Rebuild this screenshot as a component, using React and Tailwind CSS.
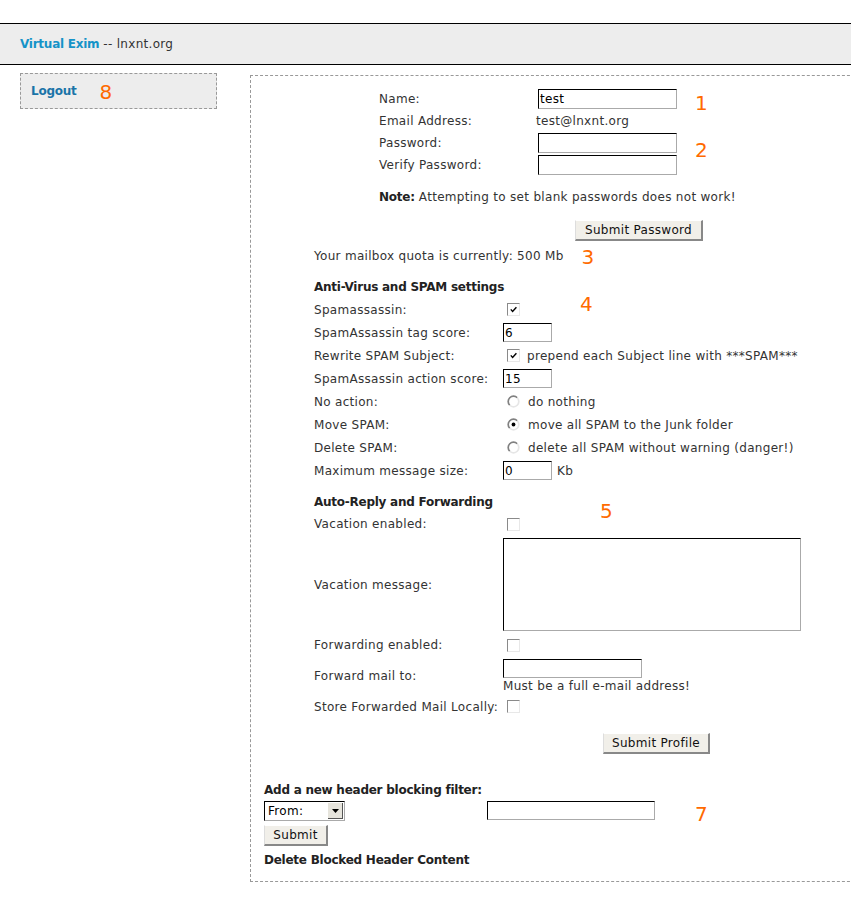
import React from "react";

// annotation digit used throughout the screenshot
const Num = ({ children, className = "" }) => (
  <span className={`text-[20px] leading-none tracking-normal text-[#ff6a00] ${className}`}>{children}</span>
);

const Input = ({ value = "", className = "" }) => (
  <div
    className={`flex items-center border-t border-l border-r border-b border-t-black border-l-black border-r-[#aaa] border-b-[#aaa] bg-white pl-[1px] text-[12px] text-black ${className}`}
  >
    {value}
  </div>
);

const Button = ({ children, className = "" }) => (
  <div
    className={`flex h-[21px] items-center justify-center border-t border-l border-r-2 border-b-2 border-t-white border-l-[#ddd] border-r-[#888] border-b-[#888] bg-[#f1efe9] text-[12px] text-[#111] ${className}`}
  >
    {children}
  </div>
);

const Check = ({ checked, className = "" }) => (
  <span
    className={`inline-flex h-[13px] w-[13px] shrink-0 items-center justify-center border border-t-[#8a8a8a] border-l-[#8a8a8a] border-r-[#e8e8e8] border-b-[#e8e8e8] bg-white ${className}`}
  >
    {checked && (
      <svg width="7" height="7" viewBox="0 0 7 7">
        <path d="M0.8 3.4 L2.6 5.4 L6.4 1.2" stroke="#000" strokeWidth="1.4" fill="none" />
      </svg>
    )}
  </span>
);

const Radio = ({ checked, className = "" }) => (
  <svg width="13" height="13" viewBox="0 0 13 13" className={`shrink-0 ${className}`}>
    <circle cx="6.5" cy="6.5" r="5.3" fill="#fff" />
    <path d="M2.75 10.25 A5.3 5.3 0 0 1 10.25 2.75" stroke="#808080" strokeWidth="1.7" fill="none" />
    <path d="M10.25 2.75 A5.3 5.3 0 0 1 2.75 10.25" stroke="#e6e6e6" strokeWidth="1.7" fill="none" />
    {checked && <circle cx="6.5" cy="6.5" r="1.9" fill="#000" />}
  </svg>
);

const Row = ({ label, children, className = "h-[23px]" }) => (
  <>
    <div className={`flex items-center ${className}`}>{label}</div>
    <div className={`flex items-center ${className}`}>{children}</div>
  </>
);

export default function App() {
  return (
    <div className="min-h-[897px] w-full overflow-hidden bg-white font-['DejaVu_Sans',sans-serif] text-[12px] leading-[16px] tracking-[0.3px] text-[#333]">
      {/* top bar */}
      <header className="mt-[23px] flex h-[42px] items-center border-y border-black bg-[#ededed] pl-[20px]">
        <span className="font-bold tracking-[-0.25px] text-[#1593c8]">Virtual Exim</span>
        <span className="ml-[4px]">-- lnxnt.org</span>
      </header>

      <div className="flex items-start pl-[20px] pt-[8px]">
        {/* side menu */}
        <aside className="flex h-[36px] w-[197px] shrink-0 items-center border border-dashed border-[#999] bg-[#ededed] pl-[10px]">
          <span className="font-bold tracking-[-0.25px] text-[#1a74a8]">Logout</span>
          <Num className="ml-[23px] mt-[1px]">8</Num>
        </aside>

        {/* main form */}
        <main className="ml-[33px] mt-[2px] w-[620px] shrink-0 border border-dashed border-[#999] pb-[13px] pt-[12px]">
          {/* account */}
          <div className="ml-[128px] grid grid-cols-[159px_139px_auto]">
            <div className="col-start-1 row-start-1 flex h-[22px] items-center">Name:</div>
            <div className="col-start-2 row-start-1 flex h-[22px] items-center">
              <Input value="test" className="h-[20px] w-[139px]" />
            </div>
            <Num className="col-start-3 row-start-1 -mb-[3px] self-end pl-[18px]">1</Num>

            <div className="col-start-1 row-start-2 flex h-[22px] items-center">Email Address:</div>
            <div className="col-start-2 row-start-2 -ml-[2px] flex h-[22px] items-center">test@lnxnt.org</div>

            <div className="col-start-1 row-start-3 flex h-[22px] items-center">Password:</div>
            <div className="col-start-2 row-start-3 flex h-[22px] items-center">
              <Input className="h-[20px] w-[139px]" />
            </div>
            <Num className="col-start-3 row-start-3 row-span-2 -mt-[8px] self-center pl-[18px]">2</Num>

            <div className="col-start-1 row-start-4 flex h-[22px] items-center">Verify Password:</div>
            <div className="col-start-2 row-start-4 flex h-[22px] items-center">
              <Input className="h-[20px] w-[139px]" />
            </div>
          </div>

          <p className="ml-[128px] mt-[13px]">
            <b className="tracking-[-0.25px] text-[#222]">Note:</b> Attempting to set blank passwords does not work!
          </p>
          <Button className="ml-[324px] mt-[15px] w-[128px]">Submit Password</Button>

          <div className="ml-[63px] mt-[3px] flex items-center">
            <span>Your mailbox quota is currently: 500 Mb</span>
            <Num className="ml-[18px] mt-[3px]">3</Num>
          </div>

          {/* spam */}
          <div className="ml-[63px] mt-[9px] grid grid-cols-[189px_auto]">
            <div className="col-span-2 flex h-[22px] items-center font-bold tracking-[-0.25px] text-[#222]">
              Anti-Virus and SPAM settings
            </div>
            <Row label="Spamassassin:">
              <Check checked className="ml-[4px]" />
              <Num className="ml-[60px] -mt-[12px]">4</Num>
            </Row>
            <Row label="SpamAssassin tag score:">
              <Input value="6" className="h-[19px] w-[49px]" />
            </Row>
            <Row label="Rewrite SPAM Subject:">
              <Check checked className="ml-[4px]" />
              <span className="ml-[7px]">prepend each Subject line with ***SPAM***</span>
            </Row>
            <Row label="SpamAssassin action score:">
              <Input value="15" className="h-[19px] w-[49px]" />
            </Row>
            <Row label="No action:">
              <Radio className="ml-[4px]" />
              <span className="ml-[8px]">do nothing</span>
            </Row>
            <Row label="Move SPAM:">
              <Radio checked className="ml-[4px]" />
              <span className="ml-[8px]">move all SPAM to the Junk folder</span>
            </Row>
            <Row label="Delete SPAM:">
              <Radio className="ml-[4px]" />
              <span className="ml-[8px]">delete all SPAM without warning (danger!)</span>
            </Row>
            <Row label="Maximum message size:">
              <Input value="0" className="h-[19px] w-[49px]" />
              <span className="ml-[5px]">Kb</span>
            </Row>
          </div>

          {/* auto reply */}
          <div className="ml-[63px] mt-[9px] grid grid-cols-[189px_auto]">
            <div className="col-start-1 row-start-1 flex h-[22px] items-center whitespace-nowrap font-bold tracking-[-0.25px] text-[#222]">
              Auto-Reply and Forwarding
            </div>
            <Num className="col-start-2 row-start-1 row-span-2 -mt-[4px] self-center pl-[97px]">5</Num>

            <div className="col-start-1 row-start-2 flex h-[22px] items-center">Vacation enabled:</div>
            <div className="col-start-2 row-start-2 flex h-[22px] items-center">
              <Check className="ml-[4px]" />
            </div>

            <div className="col-start-1 row-start-3 flex items-center">Vacation message:</div>
            <div className="col-start-2 row-start-3 flex items-center py-[3px]">
              <Input className="h-[93px] w-[298px]" />
            </div>

            <div className="col-start-1 row-start-4 flex h-[22px] items-center">Forwarding enabled:</div>
            <div className="col-start-2 row-start-4 flex h-[22px] items-center">
              <Check className="ml-[4px]" />
            </div>

            <div className="col-start-1 row-start-5 flex items-center">Forward mail to:</div>
            <div className="col-start-2 row-start-5 flex flex-col pt-[3px]">
              <Input className="h-[19px] w-[139px]" />
              <span className="leading-[17px]">Must be a full e-mail address!</span>
            </div>

            <div className="col-start-1 row-start-6 flex h-[23px] items-center whitespace-nowrap">Store Forwarded Mail Locally:</div>
            <div className="col-start-2 row-start-6 flex h-[23px] items-center">
              <Check className="ml-[4px]" />
            </div>
          </div>

          <Button className="ml-[352px] mt-[15px] w-[107px]">Submit Profile</Button>

          {/* header filters */}
          <div className="ml-[13px] mt-[28px]">
            <p className="font-bold tracking-[-0.25px] text-[#222]">Add a new header blocking filter:</p>
            <div className="mt-[3px] flex items-start">
              <div className="flex h-[20px] w-[81px] items-center justify-between border-t border-l border-r border-b border-t-black border-l-black border-r-[#aaa] border-b-[#aaa] bg-white pl-[3px] text-black">
                <span>From:</span>
                <span className="mr-[1px] flex h-[16px] w-[15px] items-center justify-center border-r border-b border-r-[#555] border-b-[#555] bg-[#e6e4dc]">
                  <svg width="7" height="4" viewBox="0 0 7 4">
                    <path d="M0 0 H7 L3.5 4 Z" fill="#000" />
                  </svg>
                </span>
              </div>
              <Input className="ml-[142px] h-[19px] w-[168px]" />
              <Num className="ml-[40px] -mb-[3px] mt-[3px]">7</Num>
            </div>
            <Button className="mt-[4px] w-[64px]">Submit</Button>
            <p className="mt-[6px] font-bold tracking-[-0.25px] text-[#222]">Delete Blocked Header Content</p>
          </div>
        </main>
      </div>
    </div>
  );
}
